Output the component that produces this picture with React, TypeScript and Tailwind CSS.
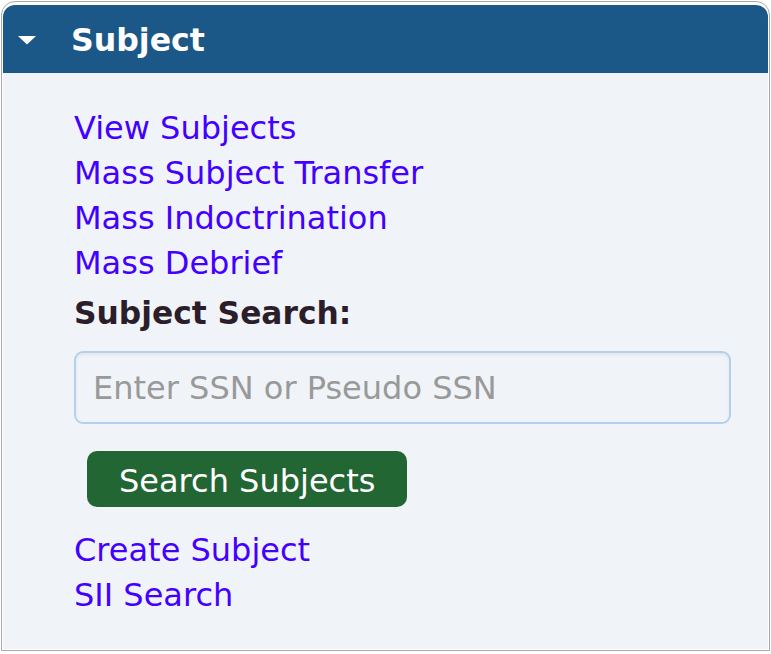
import React from "react";

const links1 = ["View Subjects", "Mass Subject Transfer", "Mass Indoctrination", "Mass Debrief"];
const links2 = ["Create Subject", "SII Search"];

export default function App() {
  return (
    <div className="w-[771px] h-[654px] bg-white p-[1px]" style={{ fontFamily: '"DejaVu Sans", Verdana, sans-serif' }}>
      <div className="w-[769px] h-[650px] border border-[#a9a9a9] rounded-t-[14px] bg-white p-[1px] flex flex-col">
        <div className="mt-[2px] h-[68px] shrink-0 bg-[#1b5887] rounded-t-[12px] flex items-center pt-[4px]">
          <svg width="18" height="9" viewBox="0 0 18 9" className="ml-[15px] shrink-0 -mt-[2px]">
            <polygon points="0,0 18,0 9,8.5" fill="#ffffff" />
          </svg>
          <span className="ml-[35px] text-white font-bold text-[31.6px] leading-none">Subject</span>
        </div>
        <div className="flex-1 bg-[#f0f4f8] pl-[71px] pr-[37px] pt-[33px] flex flex-col items-start">
          {links1.map((l) => (
            <a key={l} href="#" className="text-[32px] leading-[45px] text-[#4400ff]">
              {l}
            </a>
          ))}
          <div className="mt-[5px] text-[31.3px] leading-[45px] font-bold text-[#2b1d2a]">Subject Search:</div>
          <input
            type="text"
            placeholder="Enter SSN or Pseudo SSN"
            className="mt-[15px] w-full h-[73px] rounded-[9px] border-2 border-[#b3d0ec] bg-[#f0f4f8] pl-[17px] text-[32px] text-[#333] placeholder:text-[#999999] outline-none shadow-[inset_0_2px_3px_rgba(0,0,0,0.06)]"
            style={{ fontFamily: '"DejaVu Sans", Verdana, sans-serif' }}
          />
          <button
            type="button"
            className="mt-[27px] ml-[13px] h-[56px] px-[32px] pt-[3px] rounded-[10px] bg-[#226633] text-white text-[32px] leading-none flex items-center"
            style={{ fontFamily: '"DejaVu Sans", Verdana, sans-serif' }}
          >
            Search Subjects
          </button>
          <div className="mt-[21px] flex flex-col items-start">
            {links2.map((l) => (
              <a key={l} href="#" className="text-[32px] leading-[45px] text-[#4400ff]">
                {l}
              </a>
            ))}
          </div>
        </div>
      </div>
    </div>
  );
}
